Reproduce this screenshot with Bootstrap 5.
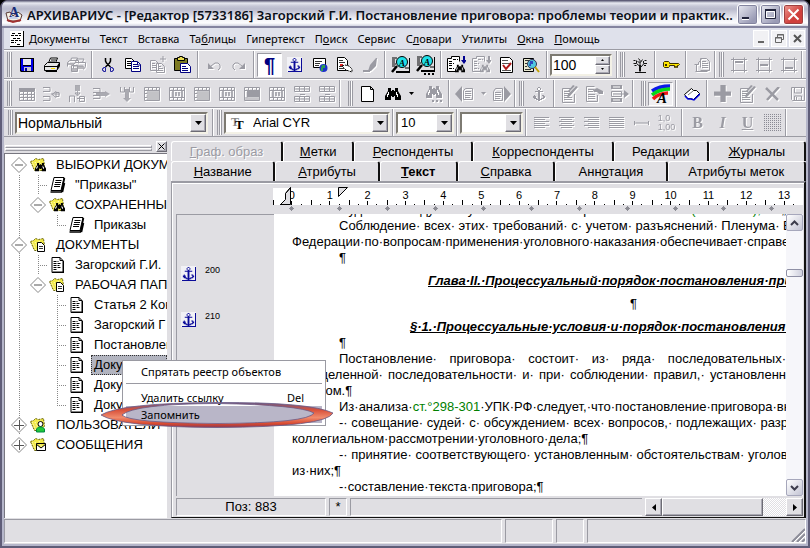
<!DOCTYPE html>
<html lang="ru">
<head>
<meta charset="utf-8">
<meta name="viewport" content="width=device-width, initial-scale=1">
<title>АРХИВАРИУС</title>
<link href="https://cdn.jsdelivr.net/npm/bootstrap@5.3.0/dist/css/bootstrap.min.css" rel="stylesheet">
<style>
:root{--face:#e0dfe3;--dim:#9b9ba3;--sel:#b2b4bf}
html,body{height:100%}
body{background:#000;color:#000;font:13px/16px "Liberation Sans",Arial,sans-serif;overflow:hidden}
button{border:0;background:none;padding:0;color:inherit;font:inherit}
svg{display:block;flex:none}
.win{background:var(--face);border:solid #5f5d78;border-width:1px 2px 2px 2px;border-radius:8px 8px 0 0;box-shadow:inset 0 0 0 2px #b5b6ca}
.titlebar{height:27px;padding:2px 4px 0 3px;border-radius:6px 6px 0 0;border-bottom:2px solid #84849f;background:linear-gradient(#77778f 0,#e8e9f1 2px,#c6c7d6 5px,#b9bacc 8px,#d5d6e2 13px,#f5f5f9 19px,#fdfdfe 22px,#c5c6d8 26px)}
.caption{font:600 13px/20px "Noto Sans","Open Sans",sans-serif;color:#0b0f18}
.capbtn{width:21px;height:21px;border:1px solid #fff;border-radius:3px;background:linear-gradient(135deg,#e9eaf2,#9a9bb5 80%);box-shadow:inset 0 0 0 1px #83849f}
.capbtn.x{background:linear-gradient(135deg,#ef9a92,#cf3f3c 60%);box-shadow:inset 0 0 0 1px #9d4040}
.shell{margin:0 2px 3px 2px}
.menubar{height:22px;background:#dfe1eb;padding:0 1px 0 6px;font:11px/16px "Noto Sans","Open Sans",sans-serif;border-bottom:1px solid var(--dim)}
.menubar a{color:#000;text-decoration:none}
.menu-icon{margin-right:5px}
.menu-items{gap:10px}
.mdi{width:16px;height:17px;background:#f1f1f4;border:1px solid #fff}
.band-row{border-top:1px solid #fff;border-bottom:1px solid var(--dim)}
.band{height:27px;border-right:1px solid var(--dim);padding-left:3px;box-shadow:1px 0 0 #fff}
.grip{width:5px;height:25px;margin-right:2px;border:solid;border-width:0 1px;border-color:#fff var(--dim);background:linear-gradient(90deg,transparent 1px,var(--dim) 1px 2px,#fff 2px 3px,transparent 3px)}
.tb{width:25px;height:24px;display:flex;align-items:center;justify-content:center;flex:none}
.tb.narrow{width:12px}
.tb.on{background:#fff;border:1px solid;border-color:var(--dim) #fff #fff var(--dim)}
.tb.lit{background:#f0eff2;border:1px solid;border-color:var(--dim) #fff #fff var(--dim)}
.off{color:var(--dim)}
.off svg,.off b,.off i,.off u,.off small{filter:drop-shadow(1px 1px 0 #fff)}
.vsep{width:2px;height:27px;margin:0 2px;background:linear-gradient(90deg,var(--dim) 1px,#fff 1px);flex:none}
.serif{font:bold 16px/18px "Liberation Serif",serif}
.pil{font:bold 20px/20px "Liberation Sans",sans-serif;color:#000080}
.decimals{font:9px/9px "Liberation Sans",sans-serif}
.sunk{border:2px solid;border-color:#7d7a72 #f3f1e6 #f3f1e6 #7d7a72;background:#fff;height:22px}
.pick{appearance:none;border:0;background:none;padding:0 0 0 3px;min-width:0;flex:1 1 0;font:13px/18px "Liberation Sans",sans-serif;outline:0;color:#000}
.pick.big{font-size:14px;padding-left:1px}
.raised{background:var(--face);border:1px solid;border-color:#fff #6c6b74 #6c6b74 #fff;box-shadow:inset -1px -1px 0 #a9a8b2;display:flex;align-items:center;justify-content:center}
.tree-pane{width:163px;margin-right:4px}
.tree-head{height:12px;padding:0 0 0 1px}
.tree-head .rail{height:3px;border:1px solid;border-color:#fff var(--dim) var(--dim) #fff}
.tree{background:#fff;border:solid;border-width:1px 0 0 1px;border-color:#77767f;padding:1px 0 0 5px;overflow:hidden}
.node{height:20px;white-space:nowrap}
.node svg{margin:0 0 0 1px}
.node .lbl{padding:0 2px;margin-left:6px;line-height:18px;flex:1;border:1px solid transparent}
.node.cur .lbl{background:var(--sel);border:1px dotted #333}
.g{width:19px;height:20px;flex:none;background-repeat:no-repeat}
.g.v{background-image:repeating-linear-gradient(#888 0 1px,transparent 1px 2px);background-position:9px 0;background-size:1px 100%}
.g.t,.g.e{background-image:repeating-linear-gradient(#888 0 1px,transparent 1px 2px),repeating-linear-gradient(90deg,#888 0 1px,transparent 1px 2px);background-position:9px 0,9px 10px;background-size:1px 100%,10px 1px}
.g.e{background-size:1px 11px,10px 1px}
.g svg{margin:2px 0 0 1px}
.tabset a{height:20px;display:flex;align-items:center;justify-content:center;color:#000;text-decoration:none;border-top:1px solid #fff;border-left:1px solid #fff;border-right:2px solid #111;border-radius:3px 3px 0 0;min-width:0;padding-top:1px;white-space:nowrap}
.tabset a.gone{color:var(--dim);text-shadow:1px 1px 0 #fff}
.w70{flex:70 1 0}.w77{flex:77 1 0}.w94{flex:94 1 0}.w97{flex:97 1 0}.w104{flex:104 1 0}.w112{flex:112 1 0}.w119{flex:119 1 0}.w139{flex:139 1 0}.w142{flex:142 1 0}
.page-frame{border:solid;border-width:2px 2px 1px 1px;border-color:var(--dim) #111 #111 var(--dim);box-shadow:inset 1px 1px 0 #fff;padding:0 1px 1px 4px}
.ruler-wrap{height:31px;padding:5px 0 0 97px;border-bottom:0}
.ruler{height:17px;background:#fff;position:relative}
.ruler span{flex:1 1 0;text-align:center;font:11px/14px "Liberation Sans",sans-serif;height:17px;background:linear-gradient(#000,#000) 50% 100%/1px 4px no-repeat,linear-gradient(#000,#000) 0 100%/1px 5px no-repeat,linear-gradient(#000,#000) 25% 100%/1px 1px no-repeat,linear-gradient(#000,#000) 75% 100%/1px 1px no-repeat}
.ruler svg{position:absolute;left:6px;top:-2px}
.gutter{width:98px;border-left:1px solid var(--dim);border-top:1px solid var(--dim);padding:51px 0 0 4px;font:9px/9px "Liberation Sans",sans-serif}
.gutter div{height:46px}
.doc{background:#fff;overflow:hidden;padding-left:18px;min-width:0}
.doc p{margin:0;height:16px;white-space:nowrap}
.doc .first{margin-top:-12px}
.doc .ind{padding-left:47px}
.doc .jus{text-align:justify;text-align-last:justify}
.doc .title1,.doc .title2,.doc .mid{height:23px;padding-top:7px}
.doc .title1,.doc .title2{font-weight:bold;font-style:italic;text-decoration:underline}
.doc .title1{padding-left:136px}
.doc .title2{padding-left:118px}
.doc .mid{padding-left:338px}
.doc a{color:#008000;text-decoration:none}
.vscroll{width:17px;background:#f6f6fa}
.xpbtn{width:17px;height:17px;border:1px solid #a6a7bb;border-radius:2px;background:linear-gradient(135deg,#fff,#c3c4d4);display:flex;align-items:center;justify-content:center}
.xpthumb{height:8px;margin-top:38px;border:1px solid #8f90a5;border-radius:2px;background:linear-gradient(90deg,#fff,#cfd0de)}
.cell{border:1px solid;border-color:var(--dim) #fff #fff var(--dim)}
.hscroll{width:158px;background:repeating-conic-gradient(#fff 0 25%,var(--face) 0 50%) 0 0/2px 2px}
.statusbar{height:25px;padding-top:1px}
.popup{position:absolute;left:120px;top:359px;width:204px;height:66px;background:#fff;border:1px solid #9a9aa2;padding:2px 3px;font:11px/16px "Noto Sans","Open Sans",sans-serif}
.popup button{display:flex;justify-content:space-between;width:100%;height:17px;padding:0 18px 0 15px;align-items:center}
.popup button.tall{height:18px}
.popup button.hot{background:#b9b6c8}
.popup hr{margin:2px 0 5px;opacity:1;border-top:1px solid #9a9aa2}
.ring{position:absolute;left:98px;top:399px}
</style>
<script src="https://cdn.jsdelivr.net/npm/bootstrap@5.3.0/dist/js/bootstrap.bundle.min.js"></script>
</head>
<body>
<svg width="0" height="0" class="position-absolute" shape-rendering="crispEdges">
<defs>
<symbol id="save" viewBox="0 0 16 16"><path d="M1 1h14v14H2l-1-1z" fill="#000"/><path d="M2 2h2v7h8V2h2v12H3l-1-1z" fill="#0000e8"/><path d="M4 2h8v6H4z" fill="#e9e9f0"/><path d="M5 10h7v4H5z" fill="#c8c8d0"/><path d="M6 11h2v3H6z" fill="#00009c"/></symbol>
<symbol id="print" viewBox="0 0 18 16"><path d="M5.500 6l2-5h7l-2 5" fill="#fff" stroke="#000"/><path d="M8 3h5M7 5h5" stroke="#000"/><path d="M1.500 8.500l3-3h12v4l-3 4h-12z" fill="#e6e6e6" stroke="#000"/><path d="M2 9h12v1H2zM14 9l2-3v4l-2 3z" fill="#000"/><path d="M2 13h12v2H3z" fill="#000"/><path d="M8 11h4v1H8z" fill="#ffe000"/></symbol>
<symbol id="prints" viewBox="0 0 20 16"><path d="M3.500 4l1-3h6l-1 3M.500 9.500v-4l2-2h9v3M8 6l2-4h7l-2 4M6.500 11.500v-4l2-2h10v4l-2 3M6 9h10M4.500 8.500h6v6h-6z" fill="none" stroke="currentColor"/><path d="M1 6h6v2H1zM11 9h6v3h-6zM5 11h5v4H5z" fill="currentColor" opacity=".7"/></symbol>
<symbol id="cut" viewBox="0 0 16 16"><path d="M5.500 1v3l1 2 4 4M10.500 1v3l-1 2-4 4" fill="none" stroke="#000" stroke-width="1.500"/><path d="M3.500 10.500h2v4h-2v-1h-1v-2h1zM10.500 10.500h2v1h1v2h-1v1h-2z" fill="none" stroke="#2020a0"/></symbol>
<symbol id="copy" viewBox="0 0 16 16"><path d="M.500 1.500h6l3 3v7h-9z" fill="#fff" stroke="#000"/><path d="M2 4.500h4M2 6.500h5M2 8.500h5" stroke="#000"/><path d="M6.500 4.500h6l3 3v7h-9z" fill="#fff" stroke="#000080"/><path d="M8 7.500h4M8 9.500h6M8 11.500h6M12.500 5v3h3" stroke="#000080" fill="none"/></symbol>
<symbol id="pasteadd" viewBox="0 0 18 18"><path d="M1.500 4.500h5l3 3v7h-8zM7.500 7.500h5l3 3v6h-8zM3 7.500h3M3 9.500h4M3 11.500h4M9 10.500h3M9 12.500h5M9 14.500h5" fill="none" stroke="currentColor"/><path d="M14 0v6M11 3h6" stroke="currentColor" stroke-width="1"/></symbol>
<symbol id="paste" viewBox="0 0 17 17"><path d="M.500 2.500h13v12h-13z" fill="#7d7a22" stroke="#000"/><path d="M3.500 1.500h2v-1h3v1h2v3h-7z" fill="#e8dc50" stroke="#000"/><path d="M6.500 7.500h7l3 3v6h-10z" fill="#fff" stroke="#000080"/><path d="M8 10.500h4M8 12.500h6M8 14.500h6" stroke="#000080"/></symbol>
<symbol id="undo" viewBox="0 0 16 16"><path d="M2 6v6h6z" fill="currentColor"/><path d="M5 9l4-3h3l2 2v3l-2 2" fill="none" stroke="currentColor"/></symbol>
<symbol id="redo" viewBox="0 0 16 16"><path d="M14 6v6H8z" fill="currentColor"/><path d="M11 9L7 6H4L2 8v3l2 2" fill="none" stroke="currentColor"/></symbol>
<symbol id="anchor" viewBox="0 0 16 16"><path d="M7 1h2v1h1v2H9v1h3v1H9v7h1v-1h2v-2h-1v-1h1V9h1v1h1v2h-1v1h-2v1H9v1H7v-1H5v-1H3v-1H2v-2h1V9h1v1h1v2h1v1h1V6H4V5h3V4H6V2h1z" fill="currentColor"/><path d="M7 2h2v2H7z" fill="#fff"/></symbol>
<symbol id="anchorb" viewBox="0 0 16 16"><path d="M0 0h15v15H0z" fill="#f2f2f6"/><path d="M14 1h1v14H1v-1h13z" fill="#0a0a98"/><use href="#anchor" width="15" height="15" color="#0a0a98"/></symbol>
<symbol id="web" viewBox="0 0 16 16"><path d="M1.500 1.500h12v9h-12z" fill="#fff" stroke="#000"/><path d="M3 4.500h7M3 6.500h5M3 8.500h4" stroke="#333"/><circle cx="11.500" cy="11" r="4" fill="#1c32c8"/><path d="M10 8h3v3h-2v3h-2v-3z" fill="#2c9c50"/></symbol>
<symbol id="hand" viewBox="0 0 17 16"><path d="M1.500.500h7l3 3v10h-10z" fill="#fff" stroke="#000"/><path d="M3 3.500h4M3 5.500h6M3 9.500h4M3 11.500h5" stroke="#333"/><path d="M4 7h3v2H4z" fill="#e02020"/><path d="M6 9l3-1 4 1 3 3v3l-3-1-3-1-2-2z" fill="#fff" stroke="#000" stroke-dasharray="2 1"/></symbol>
<symbol id="pen" viewBox="0 0 16 16"><path d="M14 1h1l-1 8-5 5H6l2-6zM1 13h7v2H1z" fill="currentColor"/></symbol>
<symbol id="finda" viewBox="0 0 19 17"><path d="M1 2h5M1 4h3M1 6h3M1 8h4M1 10h3M14 12h4" stroke="#000"/><path d="M5 15h13V2h1v15H5z" fill="#000"/><path d="M6 10l-5 6" stroke="#000" stroke-width="2.500"/><circle cx="11" cy="6" r="5.500" fill="#20e0e8" stroke="#000" shape-rendering="auto"/><text x="8" y="9.500" font-family="Liberation Serif" font-style="italic" font-weight="bold" font-size="9">A</text></symbol>
<symbol id="bino" viewBox="0 0 16 14"><path d="M3 1h3v3h1V3h2v1h1V1h3v3l3 5v4h-6V9H9v1H7V9H6v4H0V9l3-5z" fill="currentColor"/><path d="M3 5v2H2v3h1V8h1V5zM12 5v2h1v3h-1V8h-1V5z" fill="#fff"/></symbol>
<symbol id="docfind" viewBox="0 0 19 17"><path d="M8.500 15.500h-8v-13h4v-2h8v5" fill="none" stroke="currentColor"/><path d="M2 5.500h4M2 7.500h5M2 9.500h3M2 12.500h5M6 3.500h5" stroke="currentColor" stroke-dasharray="3 1"/><use href="#bino" x="8" y="8" width="10" height="9"/></symbol>
<symbol id="docfindw" viewBox="0 0 19 17"><path d="M.500 2.500h4v-2h8v15h-12z" fill="#fff"/><use href="#docfind" width="19" height="17"/></symbol>
<symbol id="down" viewBox="0 0 5 9"><path d="M2 0h2v4h2l-3 4-3-4h2z" fill="currentColor"/></symbol>
<symbol id="check" viewBox="0 0 14 16"><path d="M.500.500h9l3 3v12h-12z" fill="#fff" stroke="#000"/><path d="M2 3.500h6M2 6.500h9M2 13.500h9" stroke="#555"/><path d="M3 8l3 4 5-6" fill="none" stroke="#b01818" stroke-width="2"/></symbol>
<symbol id="lookweb" viewBox="0 0 17 16"><path d="M.500 1.500h10v13h-10z" fill="#e9e9d0" stroke="#000"/><path d="M2 3.500h6M2 6.500h2M2 9.500h2M2 12.500h6" stroke="#333"/><circle cx="9" cy="7" r="4.500" fill="#50c8e0" stroke="#335" shape-rendering="auto"/><path d="M7 4h3v3H8v2H6z" fill="#2c48c0"/><path d="M12 10l4 5" stroke="#c0a000" stroke-width="2"/></symbol>
<symbol id="plant" viewBox="0 0 16 16"><path d="M8 15V8M7.500 9L4.500 6.500H1.500M4.500 6V3.500M8 9V3.500L6.500 1.500M9 10l3-3.500h3M11.500 6.500V4M8.500 5.500l2-3M1.500 3.500h2M12.500 3.500h2M5.500 4.500l2 1M2.500 8.500h2M12 8.500h2" fill="none" stroke="#111"/><path d="M7 8h2v6H7zM3 15h11v1H3z" fill="#111"/></symbol>
<symbol id="key" viewBox="0 0 18 10"><path d="M1.500 2.500l1-1h4l1 1v1h9l1 1-1 1h-1v2h-1v-1h-1v1h-1v-2h-5v1l-1 1h-4l-1-1z" fill="#ffe600" stroke="#3a3000"/><path d="M3 4h2v2H3z" fill="#3a3000"/></symbol>
<symbol id="bookg" viewBox="0 0 16 16"><path d="M.500 7.500h4v-2l3-3M6.500 10.500v-9h6l3 3v9h-9M1.500 14.500h12M2.500 8v6M8 4.500h4M8 6.500h6M8 8.500h6M8 10.500h6" fill="none" stroke="currentColor"/></symbol>
<symbol id="fr" viewBox="0 0 16 16"><path d="M2.500.500v15M13.500.500v15M0 2.500h16M0 13.500h16" fill="none" stroke="currentColor"/></symbol>
<symbol id="grid" viewBox="0 0 16 16"><path d="M0 2h16v3H0z" fill="currentColor"/><path d="M.500 5.500h15v9H.500zM0 8.500h16M0 11.500h16M4.500 5v10M8.500 5v10M12.500 5v10" fill="none" stroke="currentColor"/></symbol>
<symbol id="tin" viewBox="0 0 17 16"><path d="M0 1.500h7v4H0M0 14.500h7v-4H0M9 8.500l4-3v6zM13 6.500h3v4h-3M8 8h9" fill="none" stroke="currentColor"/></symbol>
<symbol id="tdown" viewBox="0 0 16 17"><path d="M6 0h5v6H6zM8 6h1v4H8z" fill="currentColor" opacity=".8"/><path d="M6 8h5l-2.500 3zM.500 17v-6h5v6M10.500 16.500v-5h5v5zM8 13.500h8" fill="none" stroke="currentColor"/></symbol>
<symbol id="tout" viewBox="0 0 17 16"><path d="M0 2.500h7v4H0M0 12.500h7v-3H0" fill="none" stroke="currentColor"/><path d="M3 6h9v4H3zM12 5l5 3-5 3z" fill="currentColor" opacity=".85"/></symbol>
<symbol id="tup" viewBox="0 0 16 16"><path d="M1.500 1v5h4V1M10.500 1v5h4V1" fill="none" stroke="currentColor"/><path d="M6 3h4v9H6zM4 12h8l-4 4z" fill="currentColor" opacity=".85"/></symbol>
<symbol id="tsel" viewBox="0 0 16 14"><path d="M.500.500h15v13H.500zM0 3.500h16M4.500 0v4M8.500 0v4M12.500 0v4M0 6.500h3M0 10.500h3" fill="none" stroke="currentColor"/><path d="M3 4h12v9H3z" fill="currentColor" opacity=".55"/></symbol>
<symbol id="tdot" viewBox="0 0 16 14"><path d="M.500.500h15v13H.500zM0 3.500h16M0 10.500h16M4.500 0v4M8.500 0v4M12.500 0v4M4.500 10v4M8.500 10v4M12.500 10v4" fill="none" stroke="currentColor"/><path d="M3 4h2v6H3zM6 5h2v4H6zM9 5h2v4H9zM12 4h2v6h-2z" fill="currentColor" opacity=".8"/></symbol>
<symbol id="tfull" viewBox="0 0 16 14"><path d="M.500.500h15v13H.500zM0 3.500h16M4.500 0v4M8.500 0v4M12.500 0v4" fill="none" stroke="currentColor"/><path d="M3 4h12v6H3z" fill="currentColor"/><path d="M1 10h14v3H1z" fill="currentColor" opacity=".5"/></symbol>
<symbol id="tsplit" viewBox="0 0 16 16"><path d="M.500.500h15v5H.500zM.500 10.500h15v5H.500zM0 3h16M0 13h16M5.500 0v6M10.500 0v6M5.500 10v6M10.500 10v6M6 8.500h5" fill="none" stroke="currentColor"/></symbol>
<symbol id="blank" viewBox="0 0 14 16"><path d="M.500.500h9l3 3v12h-12zM9.500.500v3h3" fill="#fff" stroke="#000"/></symbol>
<symbol id="drop" viewBox="0 0 5 3"><path d="M0 0h5L2.500 3z" fill="currentColor"/></symbol>
<symbol id="prev" viewBox="0 0 19 16"><path d="M7 0v16L0 8z" fill="currentColor"/><path d="M8.500 13.500v-9l2-2h7v11zM10 5.500h6M10 7.500h6M10 9.500h6M10 11.500h5" fill="none" stroke="currentColor"/></symbol>
<symbol id="next" viewBox="0 0 19 16"><path d="M12 0v16l7-8z" fill="currentColor"/><path d="M1.500 14.500v-9l2-3h7v12zM3 6.500h6M3 8.500h6M3 10.500h6M3 12.500h5" fill="none" stroke="currentColor"/></symbol>
<symbol id="edit" viewBox="0 0 17 18"><path d="M10 3.500H1.500v14h12V9M3 6.500h6M3 8.500h5M3 10.500h4M3 12.500h8M3 14.500h8" fill="none" stroke="currentColor"/><path d="M15 1l2 1-8 9-3 2 1-4zM12 0l2 1-6 6-1-1z" fill="currentColor"/></symbol>
<symbol id="point" viewBox="0 0 18 16"><path d="M8.500.500h-8v15h11V9M2 3.500h6M2 5.500h5M2 8.500h7M2 10.500h7M2 12.500h7" fill="none" stroke="currentColor"/><path d="M7 4l4-2 6 3v3h-4l-2-2H8z" fill="currentColor"/></symbol>
<symbol id="listgo" viewBox="0 0 18 18"><path d="M0 0h11v4H0zM0 13h11v4H0zM13 5l5 4-5 4z" fill="currentColor"/><path d="M2 2h7M2 15h7" stroke="#fff"/><path d="M.500 6.500h10v5H.500zM2 9h12" fill="none" stroke="currentColor"/></symbol>
<symbol id="rainbow" viewBox="0 0 20 20"><g fill="none" stroke-width="3.500" shape-rendering="auto"><path d="M1 7q7-5 18-5" stroke="#0a18e8"/><path d="M1 11q7-6 18-6" stroke="#08d818"/><path d="M2 15q6-6 15-6" stroke="#f01818"/></g><text x="6" y="19" font-family="Liberation Serif" font-style="italic" font-weight="bold" font-size="15">A</text></symbol>
<symbol id="book" viewBox="0 0 16 14"><path d="M.500 7.500l7-6 2 2 3 0 3 3-6 6-3-1-3 0z" fill="#fff" stroke="#000"/><path d="M1 9l3 3h3l3 1 6-6" fill="none" stroke="#0000e0" stroke-width="1.500"/><path d="M4 8l5-4" stroke="#777"/></symbol>
<symbol id="plus" viewBox="0 0 16 16"><path d="M6 0h5v6h5v4h-5v6H6v-6H0V6h6z" fill="currentColor"/></symbol>
<symbol id="cross" viewBox="0 0 16 14"><path d="M1 1l12 12M14 0L2 13" stroke="currentColor" stroke-width="2.500"/></symbol>
<symbol id="saveg" viewBox="0 0 16 16"><path d="M1.500 1.500h13v13h-12l-1-1zM4.500 2v5h7V2M4.500 14v-4h7v4M6.500 11v3" fill="none" stroke="currentColor"/></symbol>
<symbol id="left" viewBox="0 0 15 12"><path d="M0 .500h15M0 2.500h11M0 4.500h15M0 6.500h11M0 8.500h15M0 10.500h11" stroke="currentColor"/></symbol>
<symbol id="cent" viewBox="0 0 15 12"><path d="M0 .500h15M2 2.500h11M0 4.500h15M2 6.500h11M0 8.500h15M2 10.500h11" stroke="currentColor"/></symbol>
<symbol id="right" viewBox="0 0 15 12"><path d="M0 .500h15M4 2.500h11M0 4.500h15M4 6.500h11M0 8.500h15M4 10.500h11" stroke="currentColor"/></symbol>
<symbol id="just" viewBox="0 0 15 12"><path d="M0 .500h15M0 2.500h15M0 4.500h15M0 6.500h15M0 8.500h15M0 10.500h15" stroke="currentColor"/></symbol>
<symbol id="minus" viewBox="0 0 15 6"><path d="M0 3h15M.500 1v4M14.500 1v4" stroke="currentColor" stroke-width="1"/></symbol>
<pattern id="pt" width="2" height="2" patternUnits="userSpaceOnUse"><path d="M0 0h1v1H0z" fill="#8a8a94"/></pattern>
<pattern id="dia" width="48" height="8" patternUnits="userSpaceOnUse"><path d="M18 1h1v1h1v1h1v1h-1v1h-1v1h-1V5h-1V4h-1V3h1V2h1z" fill="#8c8c94"/></pattern>
<symbol id="dm" viewBox="0 0 16 16"><path d="M8 .500L15.500 8 8 15.500.500 8z" fill="#fff" stroke="#888"/><path d="M4 8h8" stroke="#555"/></symbol>
<symbol id="dp" viewBox="0 0 16 16"><path d="M8 .500L15.500 8 8 15.500.500 8z" fill="#fff" stroke="#888"/><path d="M3 8.500h10M8.500 3v10" stroke="#555"/></symbol>
<symbol id="fold" viewBox="0 0 17 16"><path d="M.500 4.500l3-1 2-2 3 1 5-1 1 7-2 5h-8z" fill="#f2ea48" stroke="#6a6610" stroke-dasharray="2 1"/><path d="M2 5l4 8M5 5l4 8M9 4l3 7" stroke="#fffde0" stroke-dasharray="1 1"/></symbol>
<symbol id="foldb" viewBox="0 0 17 16"><use href="#fold" width="17" height="16"/><use href="#bino" x="5" y="5" width="11" height="10"/></symbol>
<symbol id="foldd" viewBox="0 0 17 16"><use href="#fold" width="17" height="16"/><path d="M7.500 5.500h4l3 3v6h-7z" fill="#fff" stroke="#000"/><path d="M9 9.500h4M9 11.500h4" stroke="#333"/></symbol>
<symbol id="foldu" viewBox="0 0 17 16"><use href="#fold" width="17" height="16"/><circle cx="10.500" cy="7" r="2.500" fill="#fff" stroke="#000"/><path d="M6.500 15v-3l2-2h4l2 2v3z" fill="#20c838" stroke="#084"/></symbol>
<symbol id="foldm" viewBox="0 0 17 16"><use href="#fold" width="17" height="16"/><path d="M6.500 6.500h9v7h-9zM6 7l5 4 5-4" fill="#fff" stroke="#000"/></symbol>
<symbol id="stack" viewBox="0 0 16 16"><path d="M4.500.500h10l-3 13h-10z" fill="#fff" stroke="#000"/><path d="M6 3.500h6M5.500 5.500h6M5 7.500h6M4.500 9.500h6" stroke="#000"/><path d="M15 1l-3 14H1M13 15l2-9" fill="none" stroke="#000" stroke-width="1.500"/></symbol>
<symbol id="docu" viewBox="0 0 16 16"><path d="M2.500.500h8l3 3v12h-11z" fill="#fff" stroke="#000"/><path d="M10.500.500v3h3M14 4v12M3 15h11" fill="none" stroke="#000"/><path d="M4 4.500h5M4 6.500h8M4 8.500h6M4 10.500h8M4 12.500h4" stroke="#000" stroke-dasharray="3 1"/></symbol>
</defs>
</svg>

<div class="win position-relative min-vh-100 d-flex flex-column">
  <header class="titlebar d-flex align-items-center gap-1">
    <svg width="18" height="18" viewBox="0 0 18 18"><path d="M1 7l4-1 3 4 5-4 4 3-2 6H3z" fill="#f4f0e6" stroke="#5a3b34"/><path d="M2 14l6 2 8-2" stroke="#a03030" fill="none" stroke-width="2"/><path d="M5 10h7l1 3H4z" fill="#c8d2ea"/><text x="4" y="11" font-family="Liberation Serif" font-weight="bold" font-size="14" fill="#182c78">A</text></svg>
    <div class="caption flex-grow-1 text-nowrap overflow-hidden">АРХИВАРИУС - [Редактор [5733186] Загорский Г.И. Постановление приговора: проблемы теории и практик...</div>
    <div class="d-flex" style="gap:2px">
      <button class="capbtn" aria-label="Свернуть"><svg width="19" height="19"><path d="M4 12h7v3H4z" fill="#fff"/><path d="M4 12h7v2H4z" fill="#22243c"/></svg></button>
      <button class="capbtn" aria-label="Развернуть"><svg width="19" height="19"><path d="M4.500 4.500h10v9h-10z" fill="none" stroke="#22243c"/><path d="M4 4h11v2H4z" fill="#22243c"/><path d="M5.500 6.500h8v6h-8z" fill="none" stroke="#fff"/></svg></button>
      <button class="capbtn x" aria-label="Закрыть"><svg width="19" height="19"><path d="M4.500 4.500l10 10M14.500 4.500l-10 10" stroke="#fff" stroke-width="2"/></svg></button>
    </div>
  </header>

  <div class="shell d-flex flex-column flex-grow-1">
    <nav class="menubar d-flex align-items-center">
      <svg width="14" height="16" viewBox="0 0 14 16" shape-rendering="crispEdges" class="menu-icon"><path d="M0 0h13v15H0z" fill="#fff"/><path d="M13 0v16M0 15.500h14" stroke="#000"/><path d="M2 2.500h4M8 2.500h3M1 4.500h10M3 7.500h8M1 9.500h10M1 11.500h5M7 13.500h4" stroke="#000" stroke-dasharray="3 1"/></svg>
      <div class="menu-items d-flex flex-grow-1 text-nowrap">
        <a href="#"><u>Д</u>окументы</a><a href="#">Текст</a><a href="#">Вставка</a><a href="#">Та<u>б</u>лицы</a><a href="#">Гипертекст</a><a href="#">П<u>о</u>иск</a><a href="#">Сервис</a><a href="#">С<u>л</u>овари</a><a href="#">Утилиты</a><a href="#"><u>О</u>кна</a><a href="#"><u>П</u>омощь</a>
      </div>
      <div class="d-flex" style="gap:2px">
        <button class="mdi" aria-label="Свернуть документ"><svg width="14" height="15"><path d="M4 10h6v2H4z" fill="#666"/></svg></button>
        <button class="mdi" aria-label="Восстановить документ"><svg width="14" height="15"><path d="M5.500 6V3.500h6v5H9M3.500 6.500h6v5h-6zM5 4h7M3 7h7" fill="none" stroke="#666"/></svg></button>
        <button class="mdi" aria-label="Закрыть документ"><svg width="14" height="15"><path d="M4 4l7 7M11 4l-7 7" stroke="#555" stroke-width="2"/></svg></button>
      </div>
    </nav>

    <div class="band-row d-flex">
      <div class="band d-flex align-items-center pe-0">
        <span class="grip"></span>
        <button class="tb" aria-label="Сохранить"><svg width="16" height="16"><use href="#save"/></svg></button>
        <button class="tb" aria-label="Печать"><svg width="18" height="16"><use href="#print"/></svg></button>
        <button class="tb off" aria-label="Печать пакета"><svg width="20" height="16"><use href="#prints"/></svg></button>
        <span class="vsep"></span>
        <button class="tb" aria-label="Вырезать"><svg width="16" height="16"><use href="#cut"/></svg></button>
        <button class="tb" aria-label="Копировать"><svg width="16" height="16"><use href="#copy"/></svg></button>
        <button class="tb off" aria-label="Добавить в буфер"><svg width="18" height="18"><use href="#pasteadd"/></svg></button>
        <button class="tb" aria-label="Вставить"><svg width="17" height="17"><use href="#paste"/></svg></button>
        <span class="vsep"></span>
        <button class="tb off" aria-label="Отменить"><svg width="16" height="16"><use href="#undo"/></svg></button>
        <button class="tb off" aria-label="Вернуть"><svg width="16" height="16"><use href="#redo"/></svg></button>
        <span class="vsep"></span>
        <button class="tb on pil">¶</button>
        <button class="tb" aria-label="Якорь"><svg width="16" height="16"><use href="#anchorb"/></svg></button>
        <button class="tb" aria-label="Веб"><svg width="16" height="16"><use href="#web"/></svg></button>
        <button class="tb" aria-label="Ссылка"><svg width="17" height="16"><use href="#hand"/></svg></button>
        <button class="tb off" aria-label="Маркер"><svg width="16" height="16"><use href="#pen"/></svg></button>
        <span class="vsep"></span>
        <button class="tb" aria-label="Найти"><svg width="19" height="17"><use href="#finda"/></svg></button>
        <button class="tb" aria-label="Найти далее"><svg width="19" height="20"><use href="#finda" width="19" height="17"/><path d="M8 18h2v2H8zM12 18h2v2h-2zM16 18h2v2h-2z"/></svg></button>
        <span class="vsep"></span>
        <button class="tb" aria-label="Поиск в документах"><svg width="19" height="17"><use href="#docfindw"/><use href="#down" x="14" width="5" height="9" color="#000090"/></svg></button>
        <button class="tb off" aria-label="Повторить поиск"><svg width="19" height="17"><use href="#docfind"/><use href="#down" x="14" width="5" height="9"/></svg></button>
        <button class="tb" aria-label="Проверка"><svg width="14" height="16"><use href="#check"/></svg></button>
        <button class="tb" aria-label="Просмотр"><svg width="17" height="16"><use href="#lookweb"/></svg></button>
        <span class="vsep"></span>
        <div class="sunk d-flex" style="width:62px">
          <input class="pick big" type="text" value="100" aria-label="Масштаб">
          <div class="d-flex flex-column" style="width:15px">
            <button class="raised flex-fill" aria-label="Больше"><svg width="3" height="2"><path d="M0 2h3L1.500 0z"/></svg></button>
            <button class="raised flex-fill" aria-label="Меньше"><svg width="3" height="2"><path d="M0 0h3L1.500 2z"/></svg></button>
          </div>
        </div>
        <span class="ms-1"></span>
      </div>
      <div class="band d-flex align-items-center">
        <span class="grip"></span>
        <button class="tb" aria-label="Дерево"><svg width="16" height="16"><use href="#plant"/></svg></button>
        <span class="vsep"></span>
        <button class="tb" aria-label="Ключ"><svg width="18" height="10"><use href="#key"/></svg></button>
        <span class="vsep"></span>
        <button class="tb off" aria-label="Книга"><svg width="16" height="16"><use href="#bookg"/></svg></button>
      </div>
      <div class="band d-flex align-items-center ps-1">
        <span class="grip"></span>
        <button class="tb off" aria-label="По верху"><svg width="16" height="16"><use href="#fr"/><path d="M4 4h8v2H4z" fill="currentColor"/></svg></button>
        <button class="tb off" aria-label="По центру"><svg width="16" height="16"><use href="#fr"/><path d="M4 7h8v2H4z" fill="currentColor"/></svg></button>
        <button class="tb off" aria-label="По низу"><svg width="16" height="16"><use href="#fr"/><path d="M4 10h8v2H4z" fill="currentColor"/></svg></button>
      </div>
    </div>

    <div class="band-row d-flex">
      <div class="band d-flex align-items-center off">
        <span class="grip"></span>
        <button class="tb" aria-label="Таблица"><svg width="16" height="16"><use href="#grid"/></svg></button>
        <button class="tb" aria-label="Вставить строку"><svg width="17" height="16"><use href="#tin"/></svg></button>
        <button class="tb" aria-label="Вставить столбец"><svg width="16" height="17"><use href="#tdown"/></svg></button>
        <button class="tb" aria-label="Удалить строку"><svg width="17" height="16"><use href="#tout"/></svg></button>
        <button class="tb" aria-label="Удалить столбец"><svg width="16" height="16"><use href="#tup"/></svg></button>
        <button class="tb" aria-label="Ячейка"><svg width="16" height="14"><use href="#tsel"/></svg></button>
        <button class="tb" aria-label="Границы"><svg width="16" height="14"><use href="#tdot"/></svg></button>
        <button class="tb" aria-label="Строка"><svg width="16" height="14"><use href="#tsel"/></svg></button>
        <button class="tb" aria-label="Столбец"><svg width="16" height="14"><use href="#tdot"/></svg></button>
        <button class="tb" aria-label="Заливка"><svg width="16" height="14"><use href="#tfull"/></svg></button>
        <button class="tb" aria-label="Объединить"><svg width="16" height="14"><use href="#tdot"/></svg></button>
        <button class="tb" aria-label="Разбить"><svg width="16" height="16"><use href="#tsplit"/></svg></button>
        <button class="tb" aria-label="Разделить"><svg width="16" height="16"><use href="#tsplit"/></svg></button>
      </div>
      <div class="band d-flex align-items-center ps-2">
        <span class="grip"></span>
        <button class="tb" aria-label="Новый"><svg width="14" height="16"><use href="#blank"/></svg></button>
        <button class="tb" aria-label="Поиск"><svg width="16" height="14"><use href="#bino"/></svg></button>
        <button class="tb narrow" aria-label="Варианты поиска"><svg width="5" height="3"><use href="#drop"/></svg></button>
        <button class="tb off ms-1" aria-label="Искать далее"><svg width="16" height="17"><use href="#bino" width="16" height="14"/><path d="M6 15h2v2H6zM10 15h2v2h-2zM14 15h2v2h-2z" fill="currentColor"/></svg></button>
        <span class="vsep"></span>
        <button class="tb off" aria-label="Назад"><svg width="19" height="16"><use href="#prev"/></svg></button>
        <button class="tb narrow off" aria-label="История"><svg width="5" height="3"><use href="#drop"/></svg></button>
        <button class="tb off" aria-label="Вперед"><svg width="19" height="16"><use href="#next"/></svg></button>
      </div>
      <div class="band d-flex align-items-center off ps-1">
        <span class="grip"></span>
        <button class="tb" aria-label="Якорь"><svg width="16" height="16"><use href="#anchor"/></svg></button>
        <span class="vsep"></span>
        <button class="tb" aria-label="Правка ссылки"><svg width="17" height="18"><use href="#edit"/></svg></button>
        <button class="tb" aria-label="Указать"><svg width="18" height="16"><use href="#point"/></svg></button>
        <button class="tb" aria-label="Перейти"><svg width="18" height="18"><use href="#listgo"/></svg></button>
      </div>
      <div class="band d-flex align-items-center border-end-0 ps-2">
        <span class="grip"></span>
        <button class="tb lit" aria-label="Цвета"><svg width="20" height="20"><use href="#rainbow"/></svg></button>
        <span class="vsep"></span>
        <button class="tb" aria-label="Справочник"><svg width="16" height="14"><use href="#book"/></svg></button>
        <span class="vsep"></span>
        <button class="tb off" aria-label="Добавить"><svg width="17" height="17"><use href="#plus"/></svg></button>
        <button class="tb off" aria-label="Изменить"><svg width="17" height="18"><use href="#edit"/></svg></button>
        <button class="tb off" aria-label="Удалить"><svg width="16" height="14"><use href="#cross"/></svg></button>
        <button class="tb off" aria-label="Записать"><svg width="16" height="16"><use href="#saveg"/></svg></button>
      </div>
    </div>

    <div class="band-row d-flex">
      <div class="band d-flex align-items-center ps-1 pe-1">
        <span class="grip"></span>
        <div class="sunk d-flex" style="width:193px"><select class="pick big" aria-label="Стиль"><option>Нормальный</option></select><span class="raised" style="width:16px"><svg width="7" height="4"><path d="M0 0h7L3.500 4z"/></svg></span></div>
      </div>
      <div class="band d-flex align-items-center ps-1">
        <span class="grip"></span>
        <div class="sunk d-flex align-items-stretch" style="width:166px"><svg width="24" height="18" font-family="Liberation Serif" font-weight="bold"><text x="5" y="12" font-size="12" fill="#888">T</text><text x="9" y="15" font-size="13">T</text></svg><select class="pick" aria-label="Шрифт"><option>Arial CYR</option></select><span class="raised" style="width:16px"><svg width="7" height="4"><path d="M0 0h7L3.500 4z"/></svg></span></div>
        <span class="vsep"></span>
        <div class="sunk d-flex" style="width:58px"><select class="pick" aria-label="Размер"><option>10</option></select><span class="raised" style="width:16px"><svg width="7" height="4"><path d="M0 0h7L3.500 4z"/></svg></span></div>
        <span class="vsep"></span>
        <div class="sunk d-flex" style="width:63px"><select class="pick" aria-label="Цвет"><option></option></select><span class="raised" style="width:16px"><svg width="7" height="4"><path d="M0 0h7L3.500 4z"/></svg></span></div>
        <span class="vsep"></span>
        <button class="tb off" aria-label="Влево"><svg width="15" height="12"><use href="#left"/></svg></button>
        <button class="tb off" aria-label="По центру"><svg width="15" height="12"><use href="#cent"/></svg></button>
        <button class="tb off" aria-label="Вправо"><svg width="15" height="12"><use href="#right"/></svg></button>
        <button class="tb off" aria-label="По ширине"><svg width="15" height="12"><use href="#just"/></svg></button>
        <button class="tb off" aria-label="Тире"><svg width="15" height="6"><use href="#minus"/></svg></button>
        <button class="tb off text-start"><small class="decimals">1,0<br>1,00</small></button>
        <span class="vsep"></span>
        <button class="tb off serif"><b>B</b></button>
        <button class="tb off serif"><i>I</i></button>
        <button class="tb off serif"><u>U</u></button>
        <button class="tb" aria-label="Фон"><svg width="18" height="18"><path d="M0 0h18v18H0z" fill="url(#pt)"/></svg></button>
      </div>
    </div>

    <main class="d-flex flex-grow-1 pt-1">
      <aside class="tree-pane d-flex flex-column">
        <div class="tree-head d-flex">
          <div class="flex-grow-1 me-1 pt-1"><div class="rail"></div><div class="rail"></div></div>
          <button class="raised" style="width:11px;height:11px" aria-label="Закрыть панель"><svg width="7" height="7"><path d="M.500.500l6 6M6.500.500l-6 6" stroke="#000"/></svg></button>
        </div>
        <div class="tree flex-grow-1">
          <div class="node d-flex align-items-center"><span class="g"><svg width="16" height="16"><use href="#dm"/></svg></span><svg width="17" height="16"><use href="#foldb"/></svg><span class="lbl">ВЫБОРКИ ДОКУМ</span></div>
          <div class="node d-flex align-items-center"><span class="g v"></span><span class="g t"></span><svg width="17" height="16"><use href="#stack"/></svg><span class="lbl">"Приказы"</span></div>
          <div class="node d-flex align-items-center"><span class="g v"></span><span class="g"><svg width="16" height="16"><use href="#dm"/></svg></span><svg width="17" height="16"><use href="#foldb"/></svg><span class="lbl">СОХРАНЕННЫ</span></div>
          <div class="node d-flex align-items-center"><span class="g v"></span><span class="g"></span><span class="g e"></span><svg width="17" height="16"><use href="#stack"/></svg><span class="lbl">Приказы</span></div>
          <div class="node d-flex align-items-center"><span class="g v"><svg width="16" height="16"><use href="#dm"/></svg></span><svg width="17" height="16"><use href="#foldd"/></svg><span class="lbl">ДОКУМЕНТЫ</span></div>
          <div class="node d-flex align-items-center"><span class="g v"></span><span class="g t"></span><svg width="17" height="16"><use href="#docu"/></svg><span class="lbl">Загорский Г.И.</span></div>
          <div class="node d-flex align-items-center"><span class="g v"></span><span class="g"><svg width="16" height="16"><use href="#dm"/></svg></span><svg width="17" height="16"><use href="#foldd"/></svg><span class="lbl">РАБОЧАЯ ПАПКА</span></div>
          <div class="node d-flex align-items-center"><span class="g v"></span><span class="g"></span><span class="g t"></span><svg width="17" height="16"><use href="#docu"/></svg><span class="lbl">Статья 2 Кон</span></div>
          <div class="node d-flex align-items-center"><span class="g v"></span><span class="g"></span><span class="g t"></span><svg width="17" height="16"><use href="#docu"/></svg><span class="lbl">Загорский Г</span></div>
          <div class="node d-flex align-items-center"><span class="g v"></span><span class="g"></span><span class="g t"></span><svg width="17" height="16"><use href="#docu"/></svg><span class="lbl">Постановлен</span></div>
          <div class="node cur d-flex align-items-center"><span class="g v"></span><span class="g"></span><span class="g t"></span><svg width="17" height="16"><use href="#docu"/></svg><span class="lbl">Документ</span></div>
          <div class="node d-flex align-items-center"><span class="g v"></span><span class="g"></span><span class="g t"></span><svg width="17" height="16"><use href="#docu"/></svg><span class="lbl">Доку</span></div>
          <div class="node d-flex align-items-center"><span class="g v"></span><span class="g"></span><span class="g e"></span><svg width="17" height="16"><use href="#docu"/></svg><span class="lbl">Доку</span></div>
          <div class="node d-flex align-items-center"><span class="g v"><svg width="16" height="16"><use href="#dp"/></svg></span><svg width="17" height="16"><use href="#foldu"/></svg><span class="lbl">ПОЛЬЗОВАТЕЛИ</span></div>
          <div class="node d-flex align-items-center"><span class="g"><svg width="16" height="16"><use href="#dp"/></svg></span><svg width="17" height="16"><use href="#foldm"/></svg><span class="lbl">СООБЩЕНИЯ</span></div>
        </div>
      </aside>

      <section class="flex-grow-1 d-flex flex-column overflow-hidden">
        <nav class="tabset">
          <div class="d-flex">
            <a href="#" class="w112 gone"><span><u>Г</u>раф. образ</span></a><a href="#" class="w70"><span><u>М</u>етки</span></a><a href="#" class="w119"><span><u>Р</u>еспонденты</span></a><a href="#" class="w142"><span><u>К</u>орреспонденты</span></a><a href="#" class="w94"><span>Ре<u>д</u>акции</span></a><a href="#" class="w97"><span><u>Ж</u>урналы</span></a>
          </div>
          <div class="d-flex">
            <a href="#" class="w104"><span><u>Н</u>азвание</span></a><a href="#" class="w104"><span><u>А</u>трибуты</span></a><a href="#" class="w77 fw-bold"><span><u>Т</u>екст</span></a><a href="#" class="w97"><span><u>С</u>правка</span></a><a href="#" class="w112"><span>Анн<u>о</u>тация</span></a><a href="#" class="w139"><span>Атрибуты меток</span></a>
          </div>
        </nav>
        <div class="page-frame flex-grow-1 d-flex flex-column">
          <div class="ruler-wrap">
            <div class="ruler d-flex"><span>0</span><span>1</span><span>2</span><span>3</span><span>4</span><span>5</span><span>6</span><span>7</span><span>8</span><span>9</span><span>10</span><span>11</span><span>12</span><span>13</span>
              <svg width="74" height="20"><path d="M1 18.500h10.500V1.500l-5 6v6l-5 5M6.500 7.500l5-6" fill="#e0dfe3" stroke="#000"/><path d="M59.500 1.500h9l-9 9z" fill="#e0dfe3" stroke="#000"/></svg>
            </div>
            <svg width="100%" height="8" shape-rendering="crispEdges"><rect width="100%" height="8" fill="url(#dia)"/></svg>
          </div>
          <div class="d-flex flex-grow-1">
            <div class="gutter flex-shrink-0">
              <div class="d-flex gap-2"><svg width="16" height="16"><use href="#anchorb"/></svg>200</div>
              <div class="d-flex gap-2"><svg width="16" height="16"><use href="#anchorb"/></svg>210</div>
            </div>
            <article class="doc flex-grow-1">
              <p class="first ind jus">Судам· следует· учесть· эти· нормы· закона· <a href="#">(ст.· 307),</a>· „</p>
              <p class="ind jus">Соблюдение· всех· этих· требований· с· учетом· разъяснений· Пленума· В</p>
              <p>Федерации·по·вопросам·применения·уголовного·наказания·обеспечивает·справедли</p>
              <p class="ind">¶</p>
              <p class="title1">Глава·II.·Процессуальный·порядок·постановления·приго</p>
              <p class="mid">¶</p>
              <p class="title2">§·1.·Процессуальные·условия·и·порядок·постановления·п</p>
              <p class="ind">¶</p>
              <p class="ind jus">Постановление· приговора· состоит· из· ряда· последовательных·</p>
              <p class="jus">определенной· последовательности· и· при· соблюдении· правил,· установленн</p>
              <p>законом.¶</p>
              <p class="ind">Из·анализа·<a href="#">ст.°298-301</a>·УПК·РФ·следует,·что·постановление·приговора·вклю</p>
              <p class="ind jus">-· совещание· судей· с· обсуждением· всех· вопросов,· подлежащих· разре</p>
              <p>коллегиальном·рассмотрении·уголовного·дела;¶</p>
              <p class="ind jus">-· принятие· соответствующего· установленным· обстоятельствам· уголовно</p>
              <p>из·них;¶</p>
              <p class="ind">-·составление·текста·приговора;¶</p>
            </article>
            <div class="vscroll d-flex flex-column flex-shrink-0">
              <button class="xpbtn" aria-label="Вверх"><svg width="9" height="6"><path d="M1 5l3.500-3.500L8 5" fill="none" stroke="#3c3c4c" stroke-width="2"/></svg></button>
              <div class="xpthumb"></div>
              <button class="xpbtn mt-auto" aria-label="Вниз"><svg width="9" height="6"><path d="M1 1l3.500 3.500L8 1" fill="none" stroke="#3c3c4c" stroke-width="2"/></svg></button>
            </div>
          </div>
          <div class="d-flex" style="height:20px;gap:3px;padding-top:2px">
            <div class="cell text-center" style="width:150px">Поз: 883</div>
            <div class="cell text-center" style="width:18px">*</div>
            <div class="cell flex-grow-1 border-end-0"></div>
            <div class="hscroll d-flex">
              <button class="raised" style="width:17px" aria-label="Влево"><svg width="4" height="7"><path d="M4 0v7L0 3.500z"/></svg></button>
              <div class="raised" style="width:101px"></div>
              <button class="raised ms-auto" style="width:17px" aria-label="Вправо"><svg width="4" height="7"><path d="M0 0v7l4-3.500z"/></svg></button>
            </div>
          </div>
        </div>
      </section>
    </main>

    <footer class="statusbar d-flex" style="gap:3px">
      <div class="cell flex-grow-1"></div>
      <div class="cell" style="width:48px"></div>
      <div class="cell" style="width:28px"></div>
      <div class="cell d-flex justify-content-end align-items-end" style="width:219px"><svg width="14" height="14"><path d="M1 14L14 1M6 14l8-8M11 14l3-3" stroke="#8c8c98" stroke-width="2"/><path d="M3 14L14 3M8 14l6-6" stroke="#fff"/></svg></div>
    </footer>
  </div>

  <div class="popup">
    <button class="tall">Спрятать реестр объектов</button>
    <hr>
    <button>Удалить ссылку<span>Del</span></button>
    <button class="hot">Запомнить</button>
  </div>
  <svg class="ring" width="236" height="30" viewBox="0 0 236 30">
    <defs><linearGradient id="rg" x1="0" x2="0" y1="0" y2="1"><stop offset="0" stop-color="#6a5a86"/><stop offset=".3" stop-color="#d8503a"/><stop offset=".6" stop-color="#f08a6c"/><stop offset=".85" stop-color="#d8482f"/><stop offset="1" stop-color="#8a3a56"/></linearGradient></defs>
    <path fill-rule="evenodd" fill="url(#rg)" stroke="#6a5a86" stroke-width=".8" d="M1 15Q20 3 117 2.500Q210 2 233 13Q226 27 117 27.500Q20 27 1 15zM22 15Q30 23 118 23.500Q208 23 214 13Q200 5 117 3.500Q34 4 22 15z"/>
  </svg>
</div>
</body>
</html>
